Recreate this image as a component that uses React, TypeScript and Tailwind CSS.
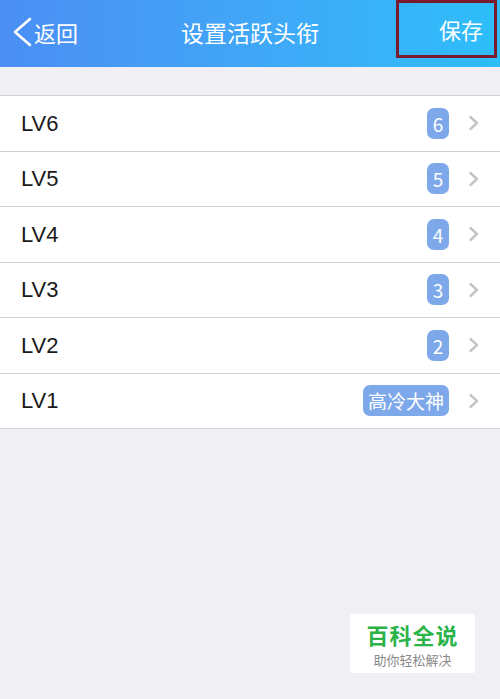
const levels = [
  { name: 'LV6', badge: '6' },
  { name: 'LV5', badge: '5' },
  { name: 'LV4', badge: '4' },
  { name: 'LV3', badge: '3' },
  { name: 'LV2', badge: '2' },
  { name: 'LV1', badge: '高冷大神' },
]

function BackArrow() {
  return (
    <svg width="22" height="32" viewBox="0 0 22 32" fill="none">
      <polyline
        points="19,3 4,16 19,29"
        stroke="white"
        strokeWidth="2.6"
        strokeLinecap="round"
        strokeLinejoin="round"
      />
    </svg>
  )
}

function RowArrow() {
  return (
    <svg width="12" height="16" viewBox="0 0 12 16" fill="none">
      <polyline
        points="2.5,2 9,8 2.5,14"
        stroke="#c4c4c8"
        strokeWidth="2.4"
        strokeLinecap="round"
        strokeLinejoin="round"
      />
    </svg>
  )
}

export default function App() {
  return (
    <div
      className="w-[500px] h-[699px] bg-[#efeff4] relative overflow-hidden"
      style={{ fontFamily: '"Noto Sans CJK SC", "Liberation Sans", sans-serif' }}
    >
      {/* Header */}
      <header className="h-[67px] flex items-center relative bg-gradient-to-r from-[#4b8ef4] to-[#2dbefa] text-white">
        <div className="flex items-center pl-[11px] -mt-[3px]">
          <BackArrow />
          <span className="text-[22px] leading-none ml-[1px]">返回</span>
        </div>
        <h1 className="absolute left-0 right-0 text-center text-[23px] leading-none -mt-[3px] font-normal">
          设置活跃头衔
        </h1>
        <div className="absolute right-[3px] top-0 w-[101px] h-[58px] border-[3px] border-[#7a1a2c] flex items-center justify-end pr-[11px]">
          <span className="text-[22px] leading-none">保存</span>
        </div>
      </header>

      {/* List */}
      <div className="mt-[28px] bg-white border-t border-[#d4d4d8]">
        {levels.map((lv) => (
          <div
            key={lv.name}
            className="h-[55.5px] flex items-center border-b border-[#cfcfd3] pl-[21px] pr-[20px]"
          >
            <span
              className="flex-1 text-[22px] text-[#1a1a1a]"
              style={{ fontFamily: '"Liberation Sans", Arial, sans-serif' }}
            >
              {lv.name}
            </span>
            <span
              className={`h-[31px] rounded-[7px] bg-[#7da8ea] text-white text-[19px] leading-none flex items-center justify-center ${
                lv.badge.length > 1 ? 'px-[5px]' : 'w-[22px]'
              }`}
            >
              {lv.badge}
            </span>
            <span className="ml-[19px] flex items-center">
              <RowArrow />
            </span>
          </div>
        ))}
      </div>

      {/* Watermark */}
      <div className="absolute left-[350px] top-[614px] w-[125px] h-[59px] bg-white rounded-[2px] flex flex-col items-center justify-center">
        <span className="text-[22px] font-bold leading-[32px] text-[#2bb34a] tracking-[1px]">百科全说</span>
        <span className="text-[13px] leading-[19px] text-[#8a8a8a]">助你轻松解决</span>
      </div>
    </div>
  )
}
